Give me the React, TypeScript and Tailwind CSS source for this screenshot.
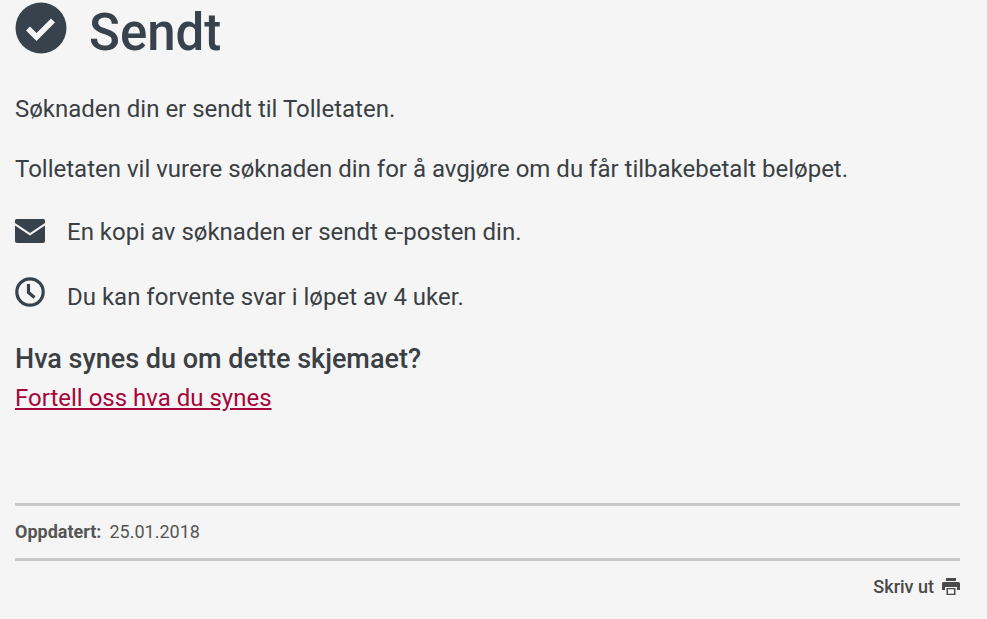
function CheckIcon() {
  return (
    <svg viewBox="0 0 52 52" className="h-[52px] w-[52px] shrink-0">
      <circle cx="26" cy="26" r="25.5" fill="#37424c" />
      <path d="M13 26.500 L21.500 35 L38 18.500" fill="none" stroke="#f5f5f5" strokeWidth="5.500" />
    </svg>
  );
}

function MailIcon() {
  return (
    <svg viewBox="0 0 30 24" className="h-6 w-[30px] shrink-0">
      <path
        d="M1.500 0h27A1.500 1.500 0 0 1 30 1.500V4L15 14 0 4V1.500A1.500 1.500 0 0 1 1.500 0zM0 6.500l15 10 15-10V22a2 2 0 0 1-2 2H2a2 2 0 0 1-2-2z"
        fill="#37424c"
      />
    </svg>
  );
}

function ClockIcon() {
  return (
    <svg viewBox="0 0 30 30" className="h-[30px] w-[30px] shrink-0">
      <circle cx="15" cy="15" r="13.2" fill="none" stroke="#37424c" strokeWidth="3.2" />
      <path d="M13.500 7v8.500l6 5" fill="none" stroke="#37424c" strokeWidth="3.2" />
    </svg>
  );
}

function PrintIcon() {
  return (
    <svg viewBox="0 0 18 17" className="h-[17px] w-[18px] shrink-0">
      <path
        d="M4 0h10v3H4zM1.500 4h15A1.500 1.500 0 0 1 18 5.500V12h-3V9H3v3H0V5.500A1.500 1.500 0 0 1 1.500 4zM4.500 10h9v7h-9zM6 11.200v4.600h6v-4.600z"
        fill="#4a4a4a"
        fillRule="evenodd"
      />
    </svg>
  );
}

export default function App() {
  return (
    <main className="min-h-screen bg-[#f5f5f5] pl-[15px] pr-[27px] pt-[2px] font-['Roboto',sans-serif] text-[#3a3f44]">
      <div className="flex h-[52px] items-start">
        <CheckIcon />
        <h1 className="ml-[22px] mt-[5px] text-[51px] font-medium leading-[52px] text-[#37424c]">Sendt</h1>
      </div>

      <p className="mt-[40px] text-[24px] leading-[30px]">Søknaden din er sendt til Tolletaten.</p>
      <p className="mt-[30px] text-[24px] leading-[30px]">
        Tolletaten vil vurere søknaden din for å avgjøre om du får tilbakebetalt beløpet.
      </p>

      <div className="mt-[32px] flex h-[32px] items-start">
        <div className="mt-[3px]">
          <MailIcon />
        </div>
        <span className="ml-[22px] text-[24px] leading-[32px]">En kopi av søknaden er sendt e-posten din.</span>
      </div>

      <div className="mt-[29px] flex h-[36px] items-start">
        <ClockIcon />
        <span className="ml-[22px] mt-[4px] text-[24px] leading-[32px]">Du kan forvente svar i løpet av 4 uker.</span>
      </div>

      <h2 className="mt-[30px] text-[27px] font-medium leading-[32px]">Hva synes du om dette skjemaet?</h2>
      <a href="#" className="mt-[8px] block w-fit text-[24px] leading-[30px] text-[#a6063a] underline">
        Fortell oss hva du synes
      </a>

      <div className="mt-[90px] flex h-[58px] items-center border-y-[3px] border-[#c8c8c8] pb-[2px] text-[18px] text-[#555555]">
        <span className="font-bold">Oppdatert:</span>
        <span className="ml-[8px]">25.01.2018</span>
      </div>

      <div className="mt-[12px] flex items-center justify-end gap-2 text-[18px] font-medium text-[#4a4a4a]">
        <span>Skriv ut</span>
        <PrintIcon />
      </div>
    </main>
  );
}
